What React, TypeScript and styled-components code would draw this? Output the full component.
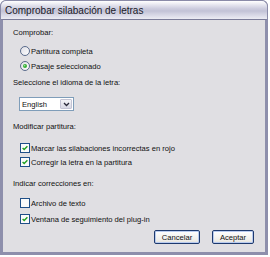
import React from "react"
import styled, { createGlobalStyle } from "styled-components"

const GlobalStyle = createGlobalStyle`
  html, body {
    margin: 0;
    padding: 0;
    background: #ffffff;
  }
  body {
    font-family: "Liberation Sans", Arial, sans-serif;
  }
`

const Window = styled.div`
  width: 268px;
  height: 255px;
  display: flex;
  flex-direction: column;
  box-sizing: border-box;
  border-radius: 6px 6px 0 0;
  overflow: hidden;
  background: #8788a6;
`

const TitleBar = styled.div`
  height: 19px;
  flex: none;
  display: flex;
  align-items: center;
  padding: 1px 0 0 4px;
  box-sizing: border-box;
  border: 1px solid #8a8ba8;
  border-bottom: none;
  border-radius: 6px 6px 0 0;
  background: linear-gradient(
    #ffffff 0%,
    #f1f1f6 12%,
    #cfcfe0 40%,
    #c2c2d6 55%,
    #d8d8e6 78%,
    #ececf3 100%
  );
  font-size: 10px;
  color: #1a1a28;
  letter-spacing: 0;
`

const Frame = styled.div`
  flex: 1;
  display: flex;
  flex-direction: column;
  margin: 0;
  border-top: 1px solid #7a7b98;
  border-left: 3px solid #8e8fac;
  border-right: 3px solid #8e8fac;
  border-bottom: 3px solid #8e8fac;
  background: #e0dfe3;
  padding: 8px 11px 0 10px;
  font-size: 7.6px;
  color: #101010;
`

const GroupLabel = styled.div<{ $gap: number }>`
  height: 10px;
  line-height: 10px;
  margin-top: ${(p) => p.$gap}px;
  white-space: nowrap;
`

const Option = styled.div<{ $gap: number }>`
  height: 12px;
  display: flex;
  align-items: center;
  gap: 1px;
  margin-top: ${(p) => p.$gap}px;
  padding-left: 7px;
  white-space: nowrap;
`

const Dropdown = styled.div`
  margin: 9px 0 0 6px;
  width: 55px;
  height: 14px;
  box-sizing: border-box;
  border: 1px solid #7f9db9;
  background: #ffffff;
  display: flex;
  align-items: stretch;
`

const DropValue = styled.span`
  flex: 1;
  padding-left: 2px;
  display: flex;
  align-items: center;
`

const DropButton = styled.span`
  width: 12px;
  margin: 1px;
  border-radius: 1px;
  background: linear-gradient(#f4f4f8, #d8d8e4);
  border: 1px solid #c4c4d4;
  box-sizing: border-box;
  display: flex;
  align-items: center;
  justify-content: center;
`

const ButtonRow = styled.div`
  margin-top: 5px;
  display: flex;
  justify-content: flex-end;
  gap: 12px;
`

const Button = styled.button<{ $w: number }>`
  width: ${(p) => p.$w}px;
  height: 14px;
  padding: 0;
  box-sizing: border-box;
  border: 1px solid #1e3a6e;
  border-radius: 2px;
  background: linear-gradient(#ffffff, #ecebe6 85%, #d6d0c5);
  box-shadow: inset 0 0 0 1px #b9cbef;
  font-family: "Liberation Sans", Arial, sans-serif;
  font-size: 7.6px;
  color: #101010;
`

const Radio = ({ checked }: { checked?: boolean }) => (
  <svg width="10" height="10" viewBox="0 0 10 10">
    <defs>
      <linearGradient id="rg" x1="0" y1="0" x2="1" y2="1">
        <stop offset="0" stopColor="#dcdce4" />
        <stop offset="1" stopColor="#ffffff" />
      </linearGradient>
    </defs>
    <circle cx="5" cy="5" r="4.5" fill="url(#rg)" stroke="#4a5c80" strokeWidth="0.9" />
    {checked && <circle cx="5" cy="5" r="2" fill="#35b035" />}
    {checked && <circle cx="4.6" cy="4.6" r="0.8" fill="#9be09b" />}
  </svg>
)

const Check = ({ checked }: { checked?: boolean }) => (
  <svg width="10" height="10" viewBox="0 0 10 10">
    <rect x="0.5" y="0.5" width="9" height="9" fill="#fbfbfb" stroke="#1f4f88" strokeWidth="1" />
    {checked && (
      <path d="M2.6 5 L4.2 6.6 L7.4 3.3" fill="none" stroke="#21a121" strokeWidth="1.4" />
    )}
  </svg>
)

export default function App() {
  return (
    <>
      <GlobalStyle />
      <Window>
        <TitleBar>Comprobar silabación de letras</TitleBar>
        <Frame>
          <GroupLabel $gap={0}>Comprobar:</GroupLabel>
          <Option $gap={7}>
            <Radio />
            Partitura completa
          </Option>
          <Option $gap={3}>
            <Radio checked />
            Pasaje seleccionado
          </Option>
          <GroupLabel $gap={6}>Seleccione el idioma de la letra:</GroupLabel>
          <Dropdown>
            <DropValue>English</DropValue>
            <DropButton>
              <svg width="7" height="5" viewBox="0 0 7 5">
                <path d="M1 1 L3.5 3.5 L6 1" fill="none" stroke="#2a2a3a" strokeWidth="1.3" />
              </svg>
            </DropButton>
          </Dropdown>
          <GroupLabel $gap={11}>Modificar partitura:</GroupLabel>
          <Option $gap={10}>
            <Check checked />
            Marcar las silabaciones incorrectas en rojo
          </Option>
          <Option $gap={2}>
            <Check checked />
            Corregir la letra en la partitura
          </Option>
          <GroupLabel $gap={11}>Indicar correcciones en:</GroupLabel>
          <Option $gap={8}>
            <Check />
            Archivo de texto
          </Option>
          <Option $gap={4}>
            <Check checked />
            Ventana de seguimiento del plug-in
          </Option>
          <ButtonRow>
            <Button $w={46}>Cancelar</Button>
            <Button $w={42}>Aceptar</Button>
          </ButtonRow>
        </Frame>
      </Window>
    </>
  )
}
